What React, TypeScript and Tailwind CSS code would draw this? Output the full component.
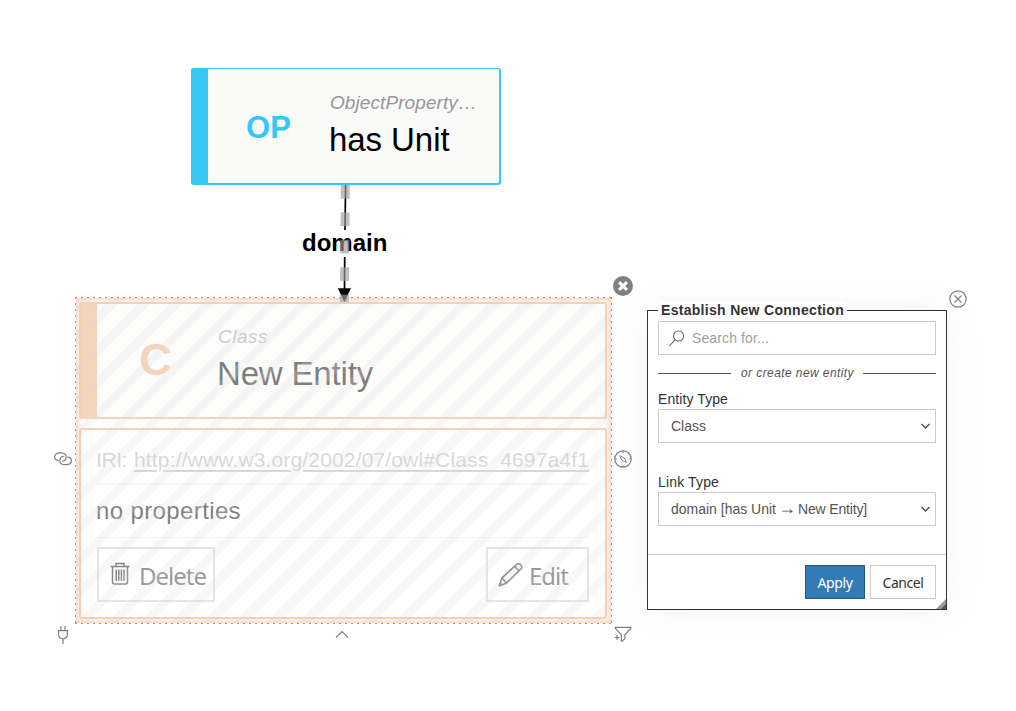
import React from "react";

const canvasText = "font-['Liberation_Sans',Arial,sans-serif]";

function Fit({ w, children, className = "" }: { w: number; children: string; className?: string }) {
  const ref = React.useRef<HTMLSpanElement>(null);
  React.useLayoutEffect(() => {
    const el = ref.current;
    if (!el) return;
    el.style.letterSpacing = "0px";
    const range = document.createRange();
    range.selectNodeContents(el);
    const gap = (w - range.getBoundingClientRect().width) / children.length;
    el.style.letterSpacing = `${gap}px`;
  }, [w, children]);
  return (
    <span ref={ref} className={`inline-block whitespace-nowrap ${className}`}>
      {children}
    </span>
  );
}

function ObjectPropertyNode() {
  return (
    <div className="absolute left-[191px] top-[68px] flex h-[117px] w-[310px] items-center rounded-[3px] border-t border-r-2 border-b-2 border-[#35c8f5] bg-[#fafaf9]">
      <div className="h-full w-[17px] shrink-0 bg-[#35c8f5]" />
      <div className="w-[121px] pt-[2px] text-center text-[31px] font-bold leading-none text-[#35c8f5]">OP</div>
      <div className="flex flex-col pt-[4px]">
        <div className="pl-px text-[19px] italic leading-[24px] text-[#979797]">
          <Fit w={147}>ObjectProperty…</Fit>
        </div>
        <div className="text-[33px] leading-[50px] text-black">
          <Fit w={120.5}>has Unit</Fit>
        </div>
      </div>
    </div>
  );
}

function DomainLink() {
  return (
    <>
      <svg className="absolute left-[330px] top-[185px]" width="30" height="117" viewBox="0 0 30 117">
        <path d="M15.6 0L15 45M14.7 72L14.5 105" stroke="#000" strokeWidth="1.7" />
        <path d="M7.8 103.3H21L14.4 117Z" fill="#000" />
      </svg>
      <div className="absolute left-[302px] top-[229px] text-[24px] font-bold leading-[28px] text-black">
        <Fit w={85.5}>domain</Fit>
      </div>
      <svg className="absolute left-[330px] top-[185px]" width="30" height="117" viewBox="0 0 30 117">
        <path d="M15.3 0L14.4 117" stroke="#a0a0a0" strokeOpacity=".65" strokeWidth="9" strokeDasharray="13.7" />
      </svg>
    </>
  );
}

function NewEntityNode() {
  return (
    <div className="absolute left-[76px] top-[298px] h-[325px] w-[535px]">
      <div className="flex h-full flex-col gap-[9px] py-[4px] pr-[4px] pl-[3px] opacity-50">
        <div className="flex h-[117px] items-center rounded-[3px] border-2 border-[#eaad77] bg-[#fafaf9]">
          <div className="h-full w-4 shrink-0 bg-[#eaad77]" />
          <div className="w-[120px] pr-[3px] pb-[3px] text-center text-[45px] font-bold leading-none text-[#eaad77]">C</div>
          <div className="flex flex-col pt-[2px]">
            <div className="pl-px text-[19px] italic leading-[24px] text-[#979797]">
              <Fit w={50}>Class</Fit>
            </div>
            <div className="text-[33px] leading-[50px] text-black">
              <Fit w={156}>New Entity</Fit>
            </div>
          </div>
        </div>
        <div className="flex h-[191px] flex-col rounded-[3px] border-2 border-[#eaad77] bg-white px-4 pt-[15px]">
          <div className="flex h-[40px] border-b-2 border-[#eee] text-[21px] leading-[30px] text-[#b3b3b3]">
            <span className="-ml-px w-[38px]">
              <Fit w={31}>IRI:</Fit>
            </span>
            <Fit w={455} className="underline decoration-2 underline-offset-[3px]">
              http://www.w3.org/2002/07/owl#Class_4697a4f1
            </Fit>
          </div>
          <div className="-mt-px h-[54px] border-b border-[#eee] text-[24px] leading-[54px] text-black">
            <Fit w={145} className="-ml-px">no properties</Fit>
          </div>
          <div className="mt-[9px] flex justify-between font-['Noto_Sans',sans-serif] text-[24px] text-[#333]">
            <div className="flex h-[55px] w-[118px] items-center border-2 border-[#ccc] pl-[11px]">
              <svg width="20" height="23" viewBox="0 0 20 23" fill="none" stroke="#111" strokeWidth="1.5" className="mb-[2px]">
                <path d="M.5 4.5H19.5M6 4V1.5H14V4M2.5 5V20Q2.5 22 4.5 22H15.5Q17.5 22 17.5 20V5M6.2 7.5V19M8.8 7.5V19M11.4 7.5V19M14 7.5V19" />
              </svg>
              <Fit w={67} className="ml-[9px] pt-[2px]">Delete</Fit>
            </div>
            <div className="flex h-[55px] w-[103px] items-center border-2 border-[#ccc] pl-[10px]">
              <svg width="25" height="25" viewBox="0 0 25 25" fill="none" stroke="#111" strokeWidth="1.6" className="mb-[1px]">
                <path d="M1 24L4 16L18.5 2.5Q20 .8 22 2.2L23 3.3Q24.8 5 22.8 7L8.5 21L1 24M4 16L8.5 21M16.5 4L21 9M2.2 21L4 23" />
              </svg>
              <Fit w={39} className="ml-[6px] pt-[2px]">Edit</Fit>
            </div>
          </div>
        </div>
      </div>
      <div className="absolute inset-0 bg-[repeating-linear-gradient(135deg,transparent_0px,transparent_2.7px,#d9d9de33_2.7px,#d9d9de33_11.5px,transparent_11.5px,transparent_22.58px)] shadow-[inset_0_0_5px_2px_#eda98580]" />
      <svg className="absolute -left-[1px] -top-[1px]" width="537" height="327" fill="none">
        <path d="M0 .5H537" stroke="#cf8468" strokeDasharray="2 4" />
        <path d="M0 326.5H537" stroke="#cf8468" strokeDasharray="2 4" />
        <path d="M.5 0V327" stroke="#df8450" strokeDasharray="2 4" />
        <path d="M536.5 0V327" stroke="#df8450" strokeDasharray="2 4" />
      </svg>
    </div>
  );
}

function Handles() {
  return (
    <>
      <svg className="absolute left-[613px] top-[276px]" width="20" height="20" viewBox="0 0 20 20">
        <circle cx="10" cy="10" r="10" fill="#808080" />
        <path d="M6.1 6.1L13.9 13.9M13.9 6.1L6.1 13.9" stroke="#fff" strokeWidth="3" />
      </svg>
      <svg className="absolute left-[54px] top-[452px]" width="18" height="14" viewBox="0 0 18 14" fill="none" stroke="#808080" strokeWidth="1.2">
        <path d="M4.6 8.6C2 8.3 .6 6.6 .6 4.8C.6 2.3 3 .9 5.8 .9H7C10 1 12.2 2.8 12.2 5.2C12.2 7.8 10.4 9.4 8.2 9.2" />
        <path d="M13.4 4.9C16 5.2 17.4 6.9 17.4 8.7C17.4 11.2 15 12.7 12.2 12.7H11C8 12.6 5.8 10.8 5.8 8.4C5.8 5.8 7.6 4.2 9.8 4.4" />
      </svg>
      <svg className="absolute left-[614px] top-[450px]" width="18" height="18" viewBox="0 0 18 18" fill="none" stroke="#808080" strokeWidth="1.2">
        <circle cx="9" cy="9" r="8.2" />
        <path d="M9 1V2.8M9 15.2V17M1 9H2.8M15.2 9H17" />
        <path d="M5.6 5.6L7.8 10.2L12.4 12.4L10.2 7.8Z" strokeWidth=".9" />
      </svg>
      <svg className="absolute left-[57px] top-[626px]" width="12" height="18" viewBox="0 0 12 18" fill="none" stroke="#808080" strokeWidth="1.2">
        <path d="M4 0V4M8 0V4M.8 4.6H11.2M1.6 4.6V8.5Q1.6 12.7 6 12.7Q10.4 12.7 10.4 8.5V4.6M6 12.7V18" />
      </svg>
      <svg className="absolute left-[335px] top-[630px]" width="14" height="9" viewBox="0 0 14 9" fill="none" stroke="#808080" strokeWidth="1.2">
        <path d="M1 7.5L7 1.5L13 7.5" />
      </svg>
      <svg className="absolute left-[614px] top-[626px]" width="18" height="17" viewBox="0 0 18 17" fill="none" stroke="#808080" strokeWidth="1.2">
        <path d="M7.4 15.6V8.8L1.4 2.4V1.4H16.8V2.4L10.8 8.8V13L7.4 15.6M.6 11.5H5.4M3 9.1V13.9" />
      </svg>
      <svg className="absolute left-[949px] top-[290px]" width="18" height="18" viewBox="0 0 18 18" fill="none" stroke="#808080" strokeWidth="1.2">
        <circle cx="9" cy="9" r="8.2" />
        <path d="M5.5 5.5L12.5 12.5M12.5 5.5L5.5 12.5" />
      </svg>
    </>
  );
}

function SelectBox({ children }: { children: React.ReactNode }) {
  return (
    <div className="flex h-[34px] items-center justify-between border border-[#ccc] bg-white pr-1 pl-3 text-[14px] text-[#555]">
      <span className="flex items-center">{children}</span>
      <svg width="11" height="8" viewBox="0 0 11 8" fill="none" stroke="#555" strokeWidth="1.5">
        <path d="M1.5 2L5.5 6L9.5 2" />
      </svg>
    </div>
  );
}

function ConnectionDialog() {
  return (
    <div className="absolute left-[647px] top-[310px] flex h-[300px] w-[300px] flex-col border border-[#333] bg-white text-[14px] leading-[20px] text-[#333] shadow-[0_0_40px_rgba(0,0,0,0.06)]">
      <div className="absolute left-[10px] -top-[10px] rounded bg-white px-[3px] font-bold leading-[18px]">
        <Fit w={183}>Establish New Connection</Fit>
      </div>
      <div className="flex flex-1 flex-col px-[10px] pt-[10px]">
        <div className="flex h-[34px] items-center border border-[#ccc] pl-[10px] text-[#a0a0a0]">
          <svg width="16" height="17" viewBox="0 0 16 17" fill="none" stroke="#666" strokeWidth="1.1" className="mt-px">
            <circle cx="9.6" cy="6" r="5" />
            <path d="M6.1 9.7L.5 16" />
          </svg>
          <Fit w={77} className="ml-[7px]">Search for...</Fit>
        </div>
        <div className="mt-[8px] flex items-center text-[12px] italic text-[#555]">
          <div className="h-px w-[73px] bg-[#555]" />
          <div className="flex-1 pl-[10px]">
            <Fit w={113}>or create new entity</Fit>
          </div>
          <div className="h-px w-[73px] bg-[#555]" />
        </div>
        <div className="mt-[6px]"><Fit w={70}>Entity Type</Fit></div>
        <SelectBox><Fit w={35}>Class</Fit></SelectBox>
        <div className="mt-[29px]"><Fit w={61}>Link Type</Fit></div>
        <SelectBox>
          <Fit w={105} className="w-[107px]">domain [has Unit</Fit>
          <span className="-mt-[2px] w-[20px] text-[18px]">→</span>
          <Fit w={69}>New Entity]</Fit>
        </SelectBox>
      </div>
      <div className="flex h-[55px] justify-end gap-[5px] border-t border-[#ccc] p-[10px] font-['Noto_Sans',sans-serif]">
        <button className="h-[34px] w-[60px] border border-[#255680] bg-[#337ab7] pt-[2px] text-white"><Fit w={35}>Apply</Fit></button>
        <button className="h-[34px] w-[66px] border border-[#ccc] bg-white pt-[2px]"><Fit w={41}>Cancel</Fit></button>
      </div>
      <svg className="absolute right-0 bottom-0" width="10" height="10">
        <path d="M10 0V10H0Z" fill="#999" />
        <path d="M10 5V10H5Z" fill="#555" />
      </svg>
    </div>
  );
}

export default function App() {
  return (
    <main className={`relative h-[711px] w-[1016px] overflow-hidden bg-white ${canvasText}`}>
      <ObjectPropertyNode />
      <NewEntityNode />
      <DomainLink />
      <ConnectionDialog />
      <Handles />
    </main>
  );
}
